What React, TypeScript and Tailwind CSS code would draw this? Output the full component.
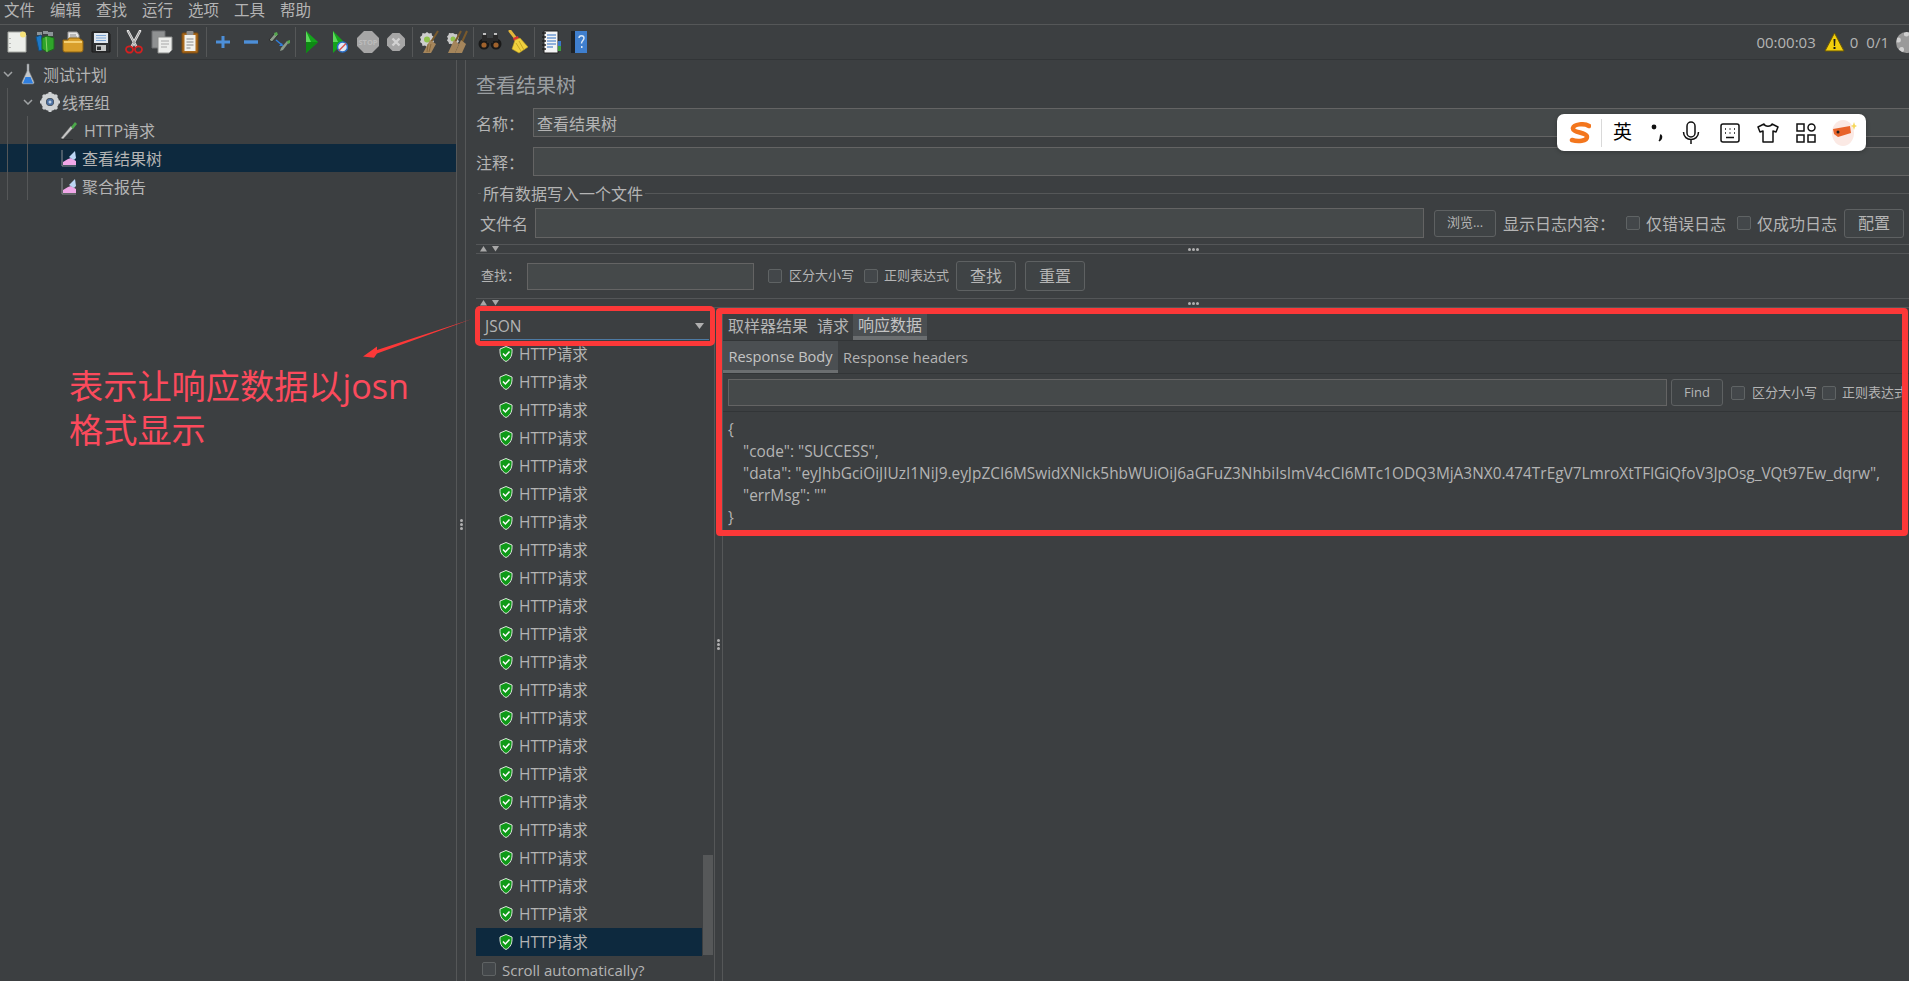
import type { ReactNode } from 'react'

const Svg = ({ w, h, children }: { w: number; h: number; children: ReactNode }) => (
  <svg width={w} height={h} viewBox={`0 0 ${w} ${h}`} className="shrink-0">
    {children}
  </svg>
)

const NewDoc = () => (
  <Svg w={20} h={22}>
    <path d="M1 1h15l3 3v17H1z" fill="#eceeea" stroke="#a5a8a3" />
    <circle cx="16" cy="3.500" r="3" fill="#f6e27a" />
    <path d="M3 7v1M3 12v1M3 16v1" stroke="#888" />
  </Svg>
)
const Books = () => (
  <Svg w={20} h={22}>
    <path d="M2 1h5v3H2zM8 0h5v3H8zM13 1h5v4h-5z" fill="#8d9498" />
    <path d="M1 6l5-2 3 14-5 2z" fill="#1c78c8" stroke="#14507f" />
    <path d="M7 7l5-2 7 2v11l-7 3-5-3z" fill="#2fa52a" stroke="#1d6b1c" />
    <path d="M11 6l1 15" stroke="#8ed46a" />
  </Svg>
)
const OpenFolder = () => (
  <Svg w={22} h={22}>
    <path d="M6 1h9l2 3v8H6z" fill="#e8e8e8" stroke="#9a9a9a" />
    <path d="M8 4h6M8 6h7M8 8h7" stroke="#888" />
    <path d="M1 9h5l1-2h10l4 3v9a2 2 0 0 1-2 2H3a2 2 0 0 1-2-2z" fill="#d99f2b" stroke="#8f6412" />
    <path d="M2 11h18" stroke="#f4cf72" strokeWidth="2" />
  </Svg>
)
const Floppy = () => (
  <Svg w={20} h={22}>
    <path d="M1 1h16l2 2v18H1z" fill="#2e3133" stroke="#1a1a1a" />
    <path d="M3 2h14v10H3z" fill="#dfe6ee" />
    <path d="M5 4.500h10M5 7h10M5 9.500h10" stroke="#7ea7d6" />
    <path d="M5 14h10v6H5z" fill="#c4c6c6" />
    <path d="M6 15.500h4v3.500H6z" fill="#2e3133" />
  </Svg>
)
const Scissors = () => (
  <Svg w={18} h={24}>
    <path d="M3 1l8 15M15 1L7 16" stroke="#e5e5e5" strokeWidth="2.600" strokeLinecap="round" />
    <path d="M3 1l8 15M15 1L7 16" stroke="#8c8c8c" strokeWidth="0.800" />
    <ellipse cx="4.500" cy="19.500" rx="3.500" ry="3.200" fill="none" stroke="#d42020" strokeWidth="1.800" />
    <ellipse cx="13.500" cy="19.500" rx="3.500" ry="3.200" fill="none" stroke="#d42020" strokeWidth="1.800" />
  </Svg>
)
const CopyIcon = () => (
  <Svg w={22} h={24}>
    <path d="M1 1h13v17H1z" fill="#8f9192" stroke="#6d6f70" />
    <path d="M7 7h14v13l-3 3H7z" fill="#ecedeb" stroke="#8b8d8c" />
    <path d="M10 11h8M10 14h8M10 17h6" stroke="#a8a8a8" />
  </Svg>
)
const PasteIcon = () => (
  <Svg w={18} h={24}>
    <rect x="1" y="3" width="16" height="20" rx="1" fill="#ab6a1c" stroke="#7a4a10" />
    <rect x="3.500" y="5" width="11" height="16" fill="#f1f1ed" />
    <rect x="5.500" y="1" width="7" height="4" rx="1" fill="#8e8e8e" />
    <path d="M5.500 9h7M5.500 12h7M5.500 15h7M5.500 18h4" stroke="#8a8a8a" />
  </Svg>
)
const PlusIcon = () => (
  <Svg w={18} h={16}>
    <path d="M9 2v12M2 8h14" stroke="#4d8fd8" strokeWidth="3" />
  </Svg>
)
const MinusIcon = () => (
  <Svg w={16} h={8}>
    <path d="M1 4h14" stroke="#4d8fd8" strokeWidth="3.400" />
  </Svg>
)
const ToggleIcon = () => (
  <Svg w={24} h={22}>
    <path d="M2 9L8 2l3 2-6 7z" fill="#8a9a8a" stroke="#2c2c2c" />
    <path d="M7 2l3-1 1 3-3 1z" fill="#55a84f" />
    <path d="M22 11l-6 8-3 1 1-3 6-7z" fill="#8a9a8a" />
    <path d="M20 10l3-1v3l-2 1z" fill="#55a84f" />
    <path d="M9 9l6 5" stroke="#2f7fdd" strokeWidth="1.500" />
    <path d="M16 15l-4 0 3-3z" fill="#2f7fdd" />
  </Svg>
)
const Play = () => (
  <Svg w={14} h={24}>
    <path d="M1 1l12 11-12 11z" fill="#14a41c" />
    <path d="M1 12h12L1 23z" fill="#0d8a14" />
    <path d="M1 1l5 11H1z" fill="#5bd95a" />
  </Svg>
)
const PlayNoTimer = () => (
  <Svg w={16} h={24}>
    <path d="M1 1l11 11L1 23z" fill="#14a41c" />
    <path d="M1 1l5 11H1z" fill="#5bd95a" />
    <circle cx="10.500" cy="17" r="5" fill="#dfe9f5" stroke="#2b6fc7" strokeWidth="1.500" />
    <path d="M7 20.500l7-7" stroke="#d9534f" strokeWidth="1.500" />
  </Svg>
)
const StopSign = () => (
  <Svg w={22} h={22}>
    <path d="M7 0h8l7 7v8l-7 7H7l-7-7V7z" fill="#a6a6a6" />
    <text x="11" y="14" textAnchor="middle" fontSize="7.500" fontWeight="700" fill="#bcbcbc">STOP</text>
  </Svg>
)
const Shutdown = () => (
  <Svg w={18} h={18}>
    <path d="M5.500 0h7L18 5.500v7L12.500 18h-7L0 12.500v-7z" fill="#a6a6a6" />
    <path d="M5.500 5.500l7 7M12.500 5.500l-7 7" stroke="#d2d2d2" strokeWidth="2.400" />
  </Svg>
)
const ClearOne = () => (
  <Svg w={20} h={24}>
    <path d="M8 2l2 1.500 2.500-.5.500 2.500 2 1.500-1 2.500 1 2.500-2 1.500-.5 2.500-2.500-.5L8 17l-2-1.500-2.500.5-.5-2.500L1 12l1-2.500L1 7l2-1.500L3.500 3 6 3.500z" fill="#cdcdcd" />
    <circle cx="8" cy="9.500" r="3" fill="#8fc24b" />
    <path d="M19 1l-7 11" stroke="#7a5a2c" strokeWidth="2" />
    <path d="M11 10l6 4-5 9H4z" fill="#a5855b" />
    <path d="M9 14l-1 8M12 14l-2 8" stroke="#7a5a2c" strokeWidth="0.700" />
  </Svg>
)
const ClearAll = () => (
  <Svg w={22} h={24}>
    <path d="M7 3l2 1.200 2-.2.500 2 1.500 1.500-1 2 1 2-1.500 1.500-.5 2-2-.2L7 15l-2-1.200-2 .2-.5-2L1 10.500l1-2-1-2 1.500-1.500.5-2 2 .2z" fill="#c9c9c9" />
    <circle cx="7" cy="9" r="2.500" fill="#8fc24b" />
    <path d="M15 1l-6 11M21 1l-5 11" stroke="#7a5a2c" strokeWidth="2" />
    <path d="M8 10l5 4-4 9H2z" fill="#a5855b" />
    <path d="M15 10l5 4-4 9H9z" fill="#a5855b" />
  </Svg>
)
const Binoculars = () => (
  <Svg w={24} h={18}>
    <circle cx="6" cy="11" r="5.500" fill="#191919" />
    <circle cx="18" cy="11" r="5.500" fill="#191919" />
    <circle cx="6" cy="12" r="2.600" fill="#a0622c" />
    <circle cx="18" cy="12" r="2.600" fill="#a0622c" />
    <path d="M4 2h5v6H4zM15 2h5v6h-5zM9 5h6v5H9z" fill="#2a2a2a" />
    <path d="M5 1h3M16 1h3" stroke="#c0c0c0" strokeWidth="2" />
  </Svg>
)
const Broom = () => (
  <Svg w={22} h={24}>
    <path d="M3 1l7 9" stroke="#e3b53a" strokeWidth="3" strokeLinecap="round" />
    <path d="M6 8l5-2 1 3-5 2z" fill="#d33" />
    <path d="M8 10l5-2 8 9-9 6-7-4z" fill="#f0d13e" stroke="#b99a1e" strokeWidth="0.600" />
    <path d="M9 13l5 8M12 11l5 9" stroke="#c7a722" />
  </Svg>
)
const LogIcon = () => (
  <Svg w={20} h={24}>
    <path d="M3 1h14v22H3z" fill="#f4f4f4" stroke="#222" />
    <path d="M6 5h9M6 8h9M6 11h9M6 14h9M6 17h6" stroke="#2f6fc2" />
    <path d="M1 3h4M1 7h4M1 11h4M1 15h4M1 19h4" stroke="#222" strokeWidth="1.500" />
    <path d="M17 11h3v5h-3z" fill="#3b78c9" />
    <path d="M17 16h3v5h-3z" fill="#3e9d3e" />
  </Svg>
)
const HelpBook = () => (
  <Svg w={18} h={24}>
    <path d="M1 1h16v22H1z" fill="#3f7fce" />
    <path d="M1 1h4v22H1z" fill="#1e2226" />
    <path d="M9 8c0-3 5-3 5 0 0 2.500-2.500 2.500-2.500 5.500" fill="none" stroke="#dbe8f6" strokeWidth="1.400" />
    <path d="M11 16h1.500v2H11z" fill="#dbe8f6" />
  </Svg>
)
const Warning = () => (
  <Svg w={21} h={20}>
    <path d="M10.500 1L20 19H1z" fill="#f2cf0c" stroke="#6f5a00" />
    <path d="M9.500 7h2l-.4 7h-1.200z" fill="#1b1b1b" />
    <path d="M9.500 15h2v2h-2z" fill="#1b1b1b" />
  </Svg>
)
const Flask = () => (
  <Svg w={14} h={22}>
    <path d="M6 1l2 0v7l5 11a1.500 1.500 0 0 1-1 2H2a1.500 1.500 0 0 1-1-2l5-11z" fill="#c3c7ca" stroke="#7d8184" strokeWidth="0.600" />
    <path d="M4.500 14h5l2.500 6a.6.6 0 0 1-.6.6H2.600a.6.6 0 0 1-.6-.6z" fill="#2f7fe0" />
  </Svg>
)
const Gear = () => (
  <Svg w={20} h={20}>
    <circle cx="10" cy="10" r="6.500" fill="none" stroke="#cfd2d4" strokeWidth="5" />
    <path d="M10 0v4M10 16v4M0 10h4M16 10h4M3 3l3 3M14 14l3 3M17 3l-3 3M6 14l-3 3" stroke="#cfd2d4" strokeWidth="3" />
    <circle cx="10" cy="10" r="3.500" fill="#4b6f9f" />
    <circle cx="10" cy="10" r="1.500" fill="#b9cde4" />
  </Svg>
)
const Pipette = () => (
  <Svg w={18} h={20}>
    <path d="M1 18L11 6l2 2L3 19z" fill="#c8c8c8" stroke="#6f6f6f" strokeWidth="0.500" />
    <path d="M11 7l4-5 2 2-4 5z" fill="#4ca84a" />
    <path d="M1 19.500h12" stroke="#2f3133" />
  </Svg>
)
const GraphIcon = () => (
  <Svg w={16} h={20}>
    <path d="M1 2v16h14" stroke="#8b8f93" fill="none" />
    <path d="M2 17v-3l5-3 3-1 5 3v4z" fill="#f0a7e8" />
    <path d="M8 9l6-6 1 7-2 2z" fill="#bcd6f4" />
  </Svg>
)
const Shield = () => (
  <Svg w={14} h={16}>
    <path d="M7 .5l6 2.500c.3 6-1 10-6 12.500C2 13 .7 9 1 3z" fill="#0f9a18" stroke="#dfe6de" />
    <path d="M4 7.500l2.400 2.500L10.500 5.500" fill="none" stroke="#fff" strokeWidth="1.500" />
  </Svg>
)
const Chevron = () => (
  <svg width="10" height="6" viewBox="0 0 10 6" className="shrink-0">
    <path d="M1 1l4 4 4-4" fill="none" stroke="#a0a3a5" strokeWidth="1.500" />
  </svg>
)

const Sep = () => (
  <div className="flex w-[5px] justify-center">
    <div className="h-[30px] w-px bg-[#555758]" />
  </div>
)
const Cell = ({ children }: { children: ReactNode }) => (
  <div className="flex w-[28px] items-center justify-center">{children}</div>
)

const Checkbox = () => <div className="h-[14px] w-[14px] shrink-0 rounded-[2px] border border-[#5f6364] bg-[#43474a]" />

const Btn = ({ label, className }: { label: string; className: string }) => (
  <div className={`flex items-center justify-center rounded-[3px] border border-[#5e6162] bg-[#3f4345] text-[#b5b5b5] ${className}`}>
    {label}
  </div>
)

const Splitter = () => (
  <div className="relative flex h-[10px] items-center border-y border-[#545658] pl-[4px]">
    <svg width="24" height="6" viewBox="0 0 24 6">
      <path d="M0 5.500L3.500 0 7 5.500z" fill="#a8a8a8" />
      <path d="M12 0h7l-3.500 5.500z" fill="#a8a8a8" />
    </svg>
    <div className="ml-[684px] flex gap-[1px]">
      <span className="h-[3px] w-[3px] rounded-full bg-[#b0b0b0]" />
      <span className="h-[3px] w-[3px] rounded-full bg-[#b0b0b0]" />
      <span className="h-[3px] w-[3px] rounded-full bg-[#b0b0b0]" />
    </div>
  </div>
)

const VDots = () => (
  <div className="flex flex-col gap-[1px]">
    <span className="h-[3px] w-[3px] rounded-full bg-[#b0b0b0]" />
    <span className="h-[3px] w-[3px] rounded-full bg-[#b0b0b0]" />
    <span className="h-[3px] w-[3px] rounded-full bg-[#b0b0b0]" />
  </div>
)

const rows = Array.from({ length: 22 }, (_, i) => i)
const token =
  'eyJhbGciOiJIUzI1NiJ9.eyJpZCI6MSwidXNlck5hbWUiOiJ6aGFuZ3NhbiIsImV4cCI6MTc1ODQ3MjA3NX0.474TrEgV7LmroXtTFlGiQfoV3JpOsg_VQt97Ew_dqrw'

export default function App() {
  return (
    <div className="relative flex h-[981px] w-[1909px] flex-col overflow-hidden bg-[#3c3f41] text-[#b4b4b4] [font-family:'Open_Sans','Noto_Sans_CJK_SC',sans-serif]">
      {/* menu */}
      <div className="flex h-[25px] items-center gap-[15px] border-b border-[#555758] pb-[2px] pl-[4px] text-[15.5px]">
        {['文件', '编辑', '查找', '运行', '选项', '工具', '帮助'].map((m) => (
          <span key={m}>{m}</span>
        ))}
      </div>

      {/* toolbar */}
      <div className="flex h-[35px] items-center border-b border-[#323537] pl-[3px]">
        <Cell><NewDoc /></Cell>
        <Cell><Books /></Cell>
        <Cell><OpenFolder /></Cell>
        <Cell><Floppy /></Cell>
        <Sep />
        <Cell><Scissors /></Cell>
        <Cell><CopyIcon /></Cell>
        <Cell><PasteIcon /></Cell>
        <Sep />
        <Cell><PlusIcon /></Cell>
        <Cell><MinusIcon /></Cell>
        <Cell><ToggleIcon /></Cell>
        <Sep />
        <Cell><Play /></Cell>
        <Cell><PlayNoTimer /></Cell>
        <Cell><StopSign /></Cell>
        <Cell><Shutdown /></Cell>
        <Sep />
        <Cell><ClearOne /></Cell>
        <Cell><ClearAll /></Cell>
        <Sep />
        <Cell><Binoculars /></Cell>
        <Cell><Broom /></Cell>
        <Sep />
        <Cell><LogIcon /></Cell>
        <Cell><HelpBook /></Cell>
        <div className="ml-auto flex items-center text-[15px]">
          <span className="mr-[8px]">00:00:03</span>
          <Warning />
          <span className="ml-[5px]">0</span>
          <span className="ml-[8px]">0/1</span>
          <div className="ml-[7px] mr-[-8px] h-[21px] w-[21px] rounded-full border-[5px] border-dotted border-[#d0d0d0] bg-[#9a9a9a]" />
        </div>
      </div>

      <div className="flex min-h-0 flex-1">
        {/* tree */}
        <div className="relative w-[456px] shrink-0 text-[16px]">
          <div className="absolute left-[7px] top-[28px] h-[112px] w-px bg-[#555758]" />
          <div className="absolute left-[27px] top-[56px] h-[84px] w-px bg-[#555758]" />
          <div className="flex h-[28px] items-center pl-[3px]">
            <Chevron />
            <span className="ml-[8px] flex w-[14px]"><Flask /></span>
            <span className="ml-[8px] pt-[1px]">测试计划</span>
          </div>
          <div className="flex h-[28px] items-center pl-[23px]">
            <Chevron />
            <span className="ml-[7px] flex"><Gear /></span>
            <span className="ml-[2px] pt-[1px]">线程组</span>
          </div>
          <div className="flex h-[28px] items-center pl-[60px]">
            <Pipette />
            <span className="ml-[6px] pt-[1px]">HTTP请求</span>
          </div>
          <div className="flex h-[28px] items-center bg-[#0d293e] pl-[61px]">
            <GraphIcon />
            <span className="ml-[5px] pt-[1px]">查看结果树</span>
          </div>
          <div className="flex h-[28px] items-center pl-[61px]">
            <GraphIcon />
            <span className="ml-[5px] pt-[1px]">聚合报告</span>
          </div>
        </div>

        {/* left splitter */}
        <div className="flex w-[10px] shrink-0 items-center justify-center border-x border-[#555758] pt-[8px]">
          <VDots />
        </div>

        {/* right panel */}
        <div className="flex min-w-0 flex-1 flex-col pl-[10px]">
          <div className="flex h-[48px] items-center pt-[4px] text-[20px] text-[#9a9ea1]">查看结果树</div>

          <div className="flex h-[29px] items-center text-[16px]">
            <span className="w-[57px] shrink-0 pt-[2px]">名称：</span>
            <div className="flex h-full flex-1 items-center border border-r-0 border-[#646464] bg-[#45494a] pl-[3px] pt-[2px]">查看结果树</div>
          </div>
          <div className="mt-[10px] flex h-[29px] items-center text-[16px]">
            <span className="w-[57px] shrink-0 pt-[2px]">注释：</span>
            <div className="h-full flex-1 border border-r-0 border-[#646464] bg-[#45494a]" />
          </div>

          <div className="flex h-[32px] items-center pl-[2px] pt-[3px] text-[16px]">
            <div className="h-px w-[3px] bg-[#555758]" />
            <span className="mx-[2px]">所有数据写入一个文件</span>
            <div className="h-px flex-1 bg-[#555758]" />
          </div>

          <div className="flex h-[30px] items-center pl-[4px] text-[16px]">
            <span className="w-[55px] shrink-0 pt-[2px]">文件名</span>
            <div className="h-full w-[889px] shrink-0 border border-[#646464] bg-[#45494a]" />
            <Btn label="浏览..." className="ml-[10px] h-[27px] w-[62px] text-[13px]" />
            <span className="ml-[7px] w-[123px] shrink-0 pt-[1px]">显示日志内容：</span>
            <Checkbox />
            <span className="ml-[6px] w-[91px] shrink-0 pt-[1px]">仅错误日志</span>
            <Checkbox />
            <span className="ml-[6px] w-[87px] shrink-0 pt-[1px]">仅成功日志</span>
            <Btn label="配置" className="h-[29px] w-[60px]" />
          </div>

          <div className="h-[6px] shrink-0" />
          <Splitter />

          <div className="flex h-[44px] items-center pl-[5px] text-[13px]">
            <span className="w-[46px] shrink-0">查找：</span>
            <div className="h-[27px] w-[227px] shrink-0 border border-[#646464] bg-[#45494a]" />
            <span className="ml-[14px]"><Checkbox /></span>
            <span className="ml-[7px] w-[75px] shrink-0">区分大小写</span>
            <Checkbox />
            <span className="ml-[6px] w-[72px] shrink-0">正则表达式</span>
            <Btn label="查找" className="h-[30px] w-[60px] text-[16px]" />
            <Btn label="重置" className="ml-[9px] h-[30px] w-[60px] text-[16px]" />
          </div>

          <Splitter />

          <div className="flex min-h-0 flex-1">
            {/* sampler list */}
            <div className="flex w-[238px] shrink-0 flex-col">
              <div className="ml-[5px] mt-[4px] flex h-[28px] w-[228px] items-center justify-between border-b border-[#4d7aa3] pl-[4px] pr-[5px] text-[15.5px]">
                <span className="pt-[3px]">JSON</span>
                <svg width="9" height="6" viewBox="0 0 9 6">
                  <path d="M0 0h9L4.500 6z" fill="#b0b0b0" />
                </svg>
              </div>
              <div className="flex min-h-0">
                <div className="w-[226px] shrink-0">
                  {rows.map((i) => (
                    <div key={i} className={`flex h-[28px] items-center pl-[23px] text-[15.5px] ${i === 21 ? 'bg-[#0d293e]' : ''}`}>
                      <Shield />
                      <span className="ml-[6px] pt-[2px]">HTTP请求</span>
                    </div>
                  ))}
                </div>
                <div className="ml-[1px] flex w-[10px] flex-col justify-end pb-[1px]">
                  <div className="h-[100px] bg-[#565859]" />
                </div>
              </div>
              <div className="flex h-[25px] items-center pl-[6px] text-[15px]">
                <Checkbox />
                <span className="ml-[6px] pt-[3px]">Scroll automatically?</span>
              </div>
            </div>

            {/* second splitter */}
            <div className="flex w-[9px] shrink-0 items-center justify-center border-x border-[#555758]">
              <VDots />
            </div>

            {/* result tabs */}
            <div className="flex min-w-0 flex-1 flex-col text-[16px]">
              <div className="flex h-[33px] items-stretch border-b border-[#323537] pl-[5px]">
                <span className="flex items-center pt-[3px]">取样器结果</span>
                <span className="ml-[9px] flex items-center pt-[3px]">请求</span>
                <span className="ml-[4px] flex items-center border-b-[4px] border-[#6b6e70] bg-[#4b4f52] px-[5px] pt-[5px] text-[#c4c4c4]">响应数据</span>
              </div>
              <div className="flex h-[33px] items-stretch border-b border-[#323537] text-[14.6px]">
                <span className="flex w-[115px] items-center justify-center border-b-[3px] border-[#6b6e70] bg-[#4b4f52] pt-[3px] text-[#c4c4c4]">Response Body</span>
                <span className="ml-[5px] flex items-center pt-[2px]">Response headers</span>
              </div>
              <div className="flex h-[38px] items-center border-b border-[#323537] pl-[5px] text-[13px]">
                <div className="h-[27px] w-[939px] shrink-0 border border-[#646464] bg-[#45494a]" />
                <Btn label="Find" className="ml-[4px] h-[27px] w-[52px]" />
                <span className="ml-[8px]"><Checkbox /></span>
                <span className="ml-[7px] w-[70px] shrink-0">区分大小写</span>
                <Checkbox />
                <span className="ml-[6px] shrink-0">正则表达式</span>
              </div>
              <div className="pl-[5px] pt-[7px] text-[15.4px] leading-[22px]">
                <div>{'{'}</div>
                <div className="pl-[15px]">"code": "SUCCESS",</div>
                <div className="whitespace-nowrap pl-[15px]">"data": "{token}",</div>
                <div className="pl-[15px]">"errMsg": ""</div>
                <div>{'}'}</div>
              </div>
            </div>
          </div>
        </div>
      </div>

      {/* IME bar floating over the window */}
      <div className="absolute left-[1557px] top-[114px] flex h-[37px] w-[309px] items-center rounded-[7px] bg-white pl-[12px] shadow-[0_1px_4px_rgba(0,0,0,0.25)]">
        <svg width="22" height="22" viewBox="0 0 22 22" className="shrink-0">
          <path d="M20 4C15 1 5 2 4 6c-1 5 14 4 14 9 0 4-9 5-15 3" fill="none" stroke="#f3761d" strokeWidth="4.500" strokeLinecap="round" />
        </svg>
        <div className="ml-[10px] h-[28px] w-px bg-[#d9d9d9]" />
        <span className="ml-[11px] w-[20px] text-[19px] leading-none text-black">英</span>
        <svg width="12" height="20" viewBox="0 0 12 20" className="ml-[18px] shrink-0">
          <circle cx="3" cy="4" r="2.400" fill="#111" />
          <path d="M9 12c1.800 0 2 2.500.6 4.500L8 18" fill="#111" stroke="#111" strokeWidth="1.600" />
        </svg>
        <svg width="18" height="24" viewBox="0 0 18 24" className="ml-[19px] shrink-0">
          <rect x="5" y="1" width="8" height="15" rx="4" fill="none" stroke="#111" strokeWidth="1.500" />
          <path d="M1.500 11c0 10 15 10 15 0M9 19v4" fill="none" stroke="#111" strokeWidth="1.500" />
        </svg>
        <svg width="20" height="20" viewBox="0 0 20 20" className="ml-[20px] shrink-0">
          <rect x="1" y="1" width="18" height="18" rx="2" fill="none" stroke="#111" strokeWidth="1.500" />
          <path d="M5 6h1M9.500 6h1M14 6h1M5 10h1M9.500 10h1M14 10h1M6 14.500h8" stroke="#111" strokeWidth="1.500" />
        </svg>
        <svg width="22" height="20" viewBox="0 0 22 20" className="ml-[17px] shrink-0">
          <path d="M7 1L1 4l2 5 3-1v11h10V8l3 1 2-5-6-3c-1 3-7 3-8 0z" fill="none" stroke="#111" strokeWidth="1.500" strokeLinejoin="round" />
        </svg>
        <svg width="20" height="20" viewBox="0 0 20 20" className="ml-[17px] shrink-0">
          <rect x="1" y="1" width="7" height="7" fill="none" stroke="#111" strokeWidth="1.500" />
          <circle cx="15.500" cy="4.500" r="3.500" fill="none" stroke="#111" strokeWidth="1.500" />
          <rect x="1" y="12" width="7" height="7" fill="none" stroke="#111" strokeWidth="1.500" />
          <rect x="12" y="12" width="7" height="7" fill="none" stroke="#111" strokeWidth="1.500" />
        </svg>
        <svg width="26" height="28" viewBox="0 0 26 28" className="ml-[15px] shrink-0">
          <ellipse cx="12" cy="14" rx="11" ry="13" fill="#fbe9e4" />
          <path d="M2 10l17-3 1 7-13 4-4-3z" fill="#e8632a" />
          <circle cx="7" cy="13" r="1.500" fill="#222" />
          <path d="M23 3l1 3 2 1-2 1-1 3-1-3-2-1 2-1z" fill="#f6d85a" />
        </svg>
      </div>

      {/* red annotation layer */}
      <div className="absolute left-[475px] top-[306px] h-[40px] w-[240px] rounded-[5px] border-[5px] border-[#fc3838]" />
      <div className="absolute left-[716px] top-[308px] h-[228px] w-[1192px] rounded-[4px] border-[6px] border-[#fc3838]" />
      <svg width="120" height="50" viewBox="0 0 120 50" className="absolute left-[360px] top-[314px]">
        <path d="M112 5L17 36l0-3.500L3 42.500l11 1.200 3-4.200z" fill="#fc3838" />
      </svg>
      <div className="absolute left-[69px] top-[364px] text-[34.2px] leading-[44px] text-[#fb4a5c]">
        表示让响应数据以josn
        <br />
        格式显示
      </div>
    </div>
  )
}
